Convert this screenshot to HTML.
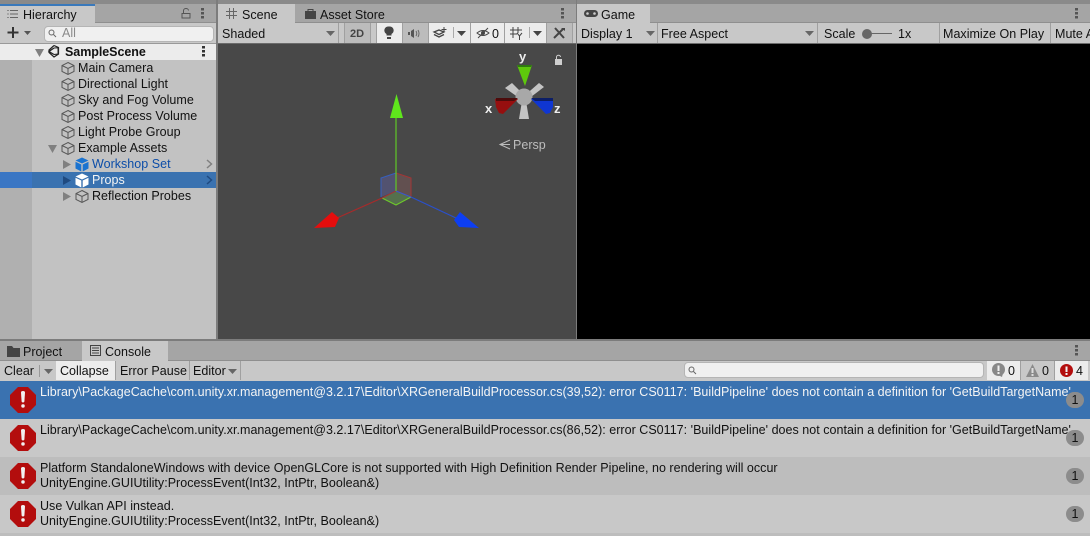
<!DOCTYPE html>
<html><head><meta charset="utf-8">
<style>
html,body{margin:0;padding:0}
body{width:1090px;height:536px;position:relative;overflow:hidden;background:#8a8a8a;font-family:"Liberation Sans",sans-serif;font-size:12.5px;color:#111;letter-spacing:.025px}
.b{position:absolute}
.t{position:absolute;white-space:pre;line-height:16px;height:16px}
svg{position:absolute;overflow:visible}
</style></head><body>
<svg width="0" height="0" style="position:absolute"><defs>
<g id="cube" fill="none" stroke="#555" stroke-width="1"><path d="M7 1.5 L13 4.5 V10.5 L7 13.5 L1 10.5 V4.5 Z M1 4.5 L7 7.5 L13 4.5 M7 7.500 V13.500"/></g>
<g id="err"><path d="M8 0H18L26 8V18L18 26H8L0 18V8Z" fill="#b30d0d"/><path d="M11 5.500Q11 4 13 4T15 5.500L14.400 14.500Q14.200 15.500 13 15.500T11.600 14.500Z" fill="#f2f2f2"/><rect x="11.300" y="17.200" width="3.400" height="3.400" rx="1.400" fill="#f2f2f2"/></g>
</defs></svg>

<!-- HIERARCHY -->
<div class="b" style="left:0;top:4px;width:216px;height:19px;background:#a5a5a5"></div>
<div class="b" style="left:0;top:4px;width:95px;height:19px;background:#c8c8c8"></div>
<div class="b" style="left:0;top:4px;width:95px;height:2px;background:#3a79bb"></div>
<div class="b" style="left:0;top:22px;width:216px;height:1px;background:#8f8f8f"></div>
<div class="b" style="left:0;top:22px;width:95px;height:1px;background:#c8c8c8"></div>
<svg style="left:7px;top:9px" width="12" height="10"><path d="M3 1.500H11M3 5H11M3 8.500H11" stroke="#666" fill="none"/><path d="M0 1.500H2M0 5H2M0 8.500H2" stroke="#888" fill="none"/></svg>
<div class="t" style="left:23px;top:7px">Hierarchy</div>
<svg style="left:181px;top:8px" width="10" height="11"><path d="M2.500 5V2.500A2.500 2 0 0 1 7.500 2.500M1 5.500H9V10H1Z" fill="none" stroke="#555"/></svg>
<svg style="left:201px;top:8px" width="3" height="11"><path d="M0 0h3v2.500H0zM0 4h3v2.500H0zM0 8h3v2.500H0z" fill="#555"/></svg>
<div class="b" style="left:0;top:23px;width:216px;height:21px;background:#c8c8c8"></div>
<div class="b" style="left:0;top:43px;width:216px;height:1px;background:#999"></div>
<svg style="left:7px;top:26px" width="24" height="14"><path d="M6 1V12M0.500 6.500H11.500" stroke="#333" stroke-width="2" fill="none"/><path d="M17 5H24L20.500 9Z" fill="#555"/></svg>
<div class="b" style="left:44px;top:26px;width:168px;height:14px;background:#f0f0f0;border:1px solid #b5b5b5;border-radius:4px"></div>
<svg style="left:48px;top:29px" width="10" height="9"><circle cx="3.500" cy="3.500" r="2.500" fill="none" stroke="#666"/><path d="M5.500 5.500L8 8" stroke="#666"/></svg>
<div class="t" style="left:62px;top:25px;color:#8a8a8a">All</div>

<div class="b" style="left:0;top:44px;width:32px;height:295px;background:#b0b0b0"></div>
<div class="b" style="left:32px;top:44px;width:184px;height:295px;background:#c2c2c2"></div>
<div class="b" style="left:0;top:44px;width:216px;height:16px;background:#ececec"></div>
<div class="b" style="left:0;top:172px;width:216px;height:16px;background:#3a72b0"></div>
<div class="b" style="left:0;top:172px;width:32px;height:16px;background:#3a76c4"></div>
<div class="b" style="left:216px;top:0;width:2px;height:340px;background:#7c7c7c"></div>

<svg style="left:35px;top:49px" width="9" height="8"><path d="M0 0H9L4.500 8Z" fill="#808080"/></svg>
<svg style="left:47px;top:44px" width="14" height="15"><path d="M7 1.500L11.500 3.500V10L7 13 2 8.500 2 6 7 1.500M7 4L2 7.500 7 10.500" fill="none" stroke="#222" stroke-width="1.200"/><path d="M7 4L11 3.800V10L7 10.500" fill="none" stroke="#222"/></svg>
<div class="t" style="left:65px;top:44px;font-weight:bold;letter-spacing:-.05px">SampleScene</div>
<svg style="left:202px;top:46px" width="3" height="11"><path d="M0 0h3v2.500H0zM0 4h3v2.500H0zM0 8h3v2.500H0z" fill="#333"/></svg>

<svg style="left:61px;top:61px" width="14" height="15"><use href="#cube"/></svg><div class="t" style="left:78px;top:60px">Main Camera</div>
<svg style="left:61px;top:77px" width="14" height="15"><use href="#cube"/></svg><div class="t" style="left:78px;top:76px">Directional Light</div>
<svg style="left:61px;top:93px" width="14" height="15"><use href="#cube"/></svg><div class="t" style="left:78px;top:92px">Sky and Fog Volume</div>
<svg style="left:61px;top:109px" width="14" height="15"><use href="#cube"/></svg><div class="t" style="left:78px;top:108px">Post Process Volume</div>
<svg style="left:61px;top:125px" width="14" height="15"><use href="#cube"/></svg><div class="t" style="left:78px;top:124px">Light Probe Group</div>
<svg style="left:48px;top:145px" width="9" height="8"><path d="M0 0H9L4.500 8Z" fill="#808080"/></svg>
<svg style="left:61px;top:141px" width="14" height="15"><use href="#cube"/></svg><div class="t" style="left:78px;top:140px">Example Assets</div>

<svg style="left:63px;top:160px" width="8" height="9"><path d="M0 0V9L8 4.500Z" fill="#808080"/></svg>
<svg style="left:75px;top:157px" width="14" height="15"><path d="M7 .5L13.500 3.500 7 6.500 .5 3.500Z" fill="#1a73d0"/><path d="M.5 4.800L6.300 7.500V14.500L.5 11.500ZM13.500 4.800L7.700 7.500V14.500L13.500 11.500Z" fill="#1a73d0"/></svg>
<div class="t" style="left:92px;top:156px;color:#0c4da8">Workshop Set</div>
<svg style="left:206px;top:159px" width="7" height="10"><path d="M1 1L5.500 5 1 9" fill="none" stroke="#808080" stroke-width="1.500"/></svg>

<svg style="left:63px;top:176px" width="8" height="9"><path d="M0 0V9L8 4.500Z" fill="#1f4a80"/></svg>
<svg style="left:75px;top:173px" width="14" height="15"><path d="M7 .5L13.500 3.500 7 6.500 .5 3.500Z" fill="#fff"/><path d="M.5 4.800L6.300 7.500V14.500L.5 11.500ZM13.500 4.800L7.700 7.500V14.500L13.500 11.500Z" fill="#fff"/></svg>
<div class="t" style="left:92px;top:172px;color:#f4f4f4">Props</div>
<svg style="left:206px;top:175px" width="7" height="10"><path d="M1 1L5.500 5 1 9" fill="none" stroke="#1f4a80" stroke-width="1.500"/></svg>

<svg style="left:63px;top:192px" width="8" height="9"><path d="M0 0V9L8 4.500Z" fill="#808080"/></svg>
<svg style="left:75px;top:189px" width="14" height="15"><use href="#cube"/></svg><div class="t" style="left:92px;top:188px">Reflection Probes</div>

<!-- SCENE -->
<div class="b" style="left:218px;top:4px;width:358px;height:19px;background:#a5a5a5"></div>
<div class="b" style="left:218px;top:4px;width:77px;height:19px;background:#c8c8c8"></div>
<div class="b" style="left:218px;top:22px;width:358px;height:1px;background:#8f8f8f"></div>
<div class="b" style="left:218px;top:22px;width:77px;height:1px;background:#c8c8c8"></div>
<svg style="left:226px;top:8px" width="11" height="11"><path d="M3.500 0V11M7.500 0V11M0 3.500H11M0 7.500H11" stroke="#666" fill="none"/></svg>
<div class="t" style="left:242px;top:7px">Scene</div>
<svg style="left:305px;top:8px" width="11" height="11"><path d="M0 3H11V11H0Z" fill="#444"/><path d="M3 3V1.500H8V3" stroke="#444" fill="none"/></svg>
<div class="t" style="left:320px;top:7px">Asset Store</div>
<svg style="left:561px;top:8px" width="3" height="11"><path d="M0 0h3v2.500H0zM0 4h3v2.500H0zM0 8h3v2.500H0z" fill="#555"/></svg>

<div class="b" style="left:218px;top:23px;width:358px;height:20px;background:#c8c8c8"></div>
<div class="b" style="left:218px;top:43px;width:358px;height:1px;background:#6b6b6b"></div>
<div class="t" style="left:222px;top:26px">Shaded</div>
<svg style="left:326px;top:31px" width="9" height="5"><path d="M0 0H9L4.500 5Z" fill="#666"/></svg>
<div class="b" style="left:338px;top:23px;width:1px;height:20px;background:#a0a0a0"></div>
<div class="b" style="left:344px;top:23px;width:1px;height:20px;background:#a0a0a0"></div>
<div class="b" style="left:345px;top:23px;width:25px;height:20px;background:#bcbcbc"></div>
<div class="t" style="left:350px;top:26px;font-size:11px;letter-spacing:0;color:#444;font-weight:bold">2D</div>
<div class="b" style="left:370px;top:23px;width:1px;height:20px;background:#a0a0a0"></div>
<div class="b" style="left:376px;top:23px;width:1px;height:20px;background:#a0a0a0"></div>
<div class="b" style="left:377px;top:23px;width:25px;height:20px;background:#ececec"></div>
<svg style="left:384px;top:26px" width="10" height="14"><path d="M5 0.500A4 4 0 0 1 7.500 8V9.500H2.500V8A4 4 0 0 1 5 0.500Z" fill="#444"/><path d="M3 11H7V13H3Z" fill="#444"/></svg>
<div class="b" style="left:402px;top:23px;width:1px;height:20px;background:#a0a0a0"></div>
<div class="b" style="left:403px;top:23px;width:25px;height:20px;background:#bcbcbc"></div>
<svg style="left:408px;top:29px" width="13" height="9"><path d="M0 3H2V6H0ZM3 2L6 0V9L3 7Z" fill="#555"/><path d="M8 2Q9.500 4.500 8 7M10 1Q12 4.500 10 8" stroke="#666" fill="none"/></svg>
<div class="b" style="left:428px;top:23px;width:1px;height:20px;background:#a0a0a0"></div>
<div class="b" style="left:429px;top:23px;width:41px;height:20px;background:#ececec"></div>
<svg style="left:433px;top:27px" width="14" height="12"><path d="M1 5L6 3 11 5 6 7.500ZM1 7.500L6 10 11 7.500" stroke="#444" fill="none" stroke-width="1.300"/><path d="M11 0V5M8.500 2.500H13.500" stroke="#444"/></svg>
<div class="b" style="left:453px;top:27px;width:1px;height:11px;background:#aaa"></div>
<svg style="left:457px;top:31px" width="9" height="5"><path d="M0 0H9L4.500 5Z" fill="#444"/></svg>
<div class="b" style="left:470px;top:23px;width:1px;height:20px;background:#a0a0a0"></div>
<div class="b" style="left:471px;top:23px;width:33px;height:20px;background:#ececec"></div>
<svg style="left:476px;top:28px" width="14" height="10"><path d="M1 5Q7 0 13 5Q7 10 1 5Z" fill="none" stroke="#444"/><path d="M2 10L12 0" stroke="#444"/><circle cx="7" cy="5" r="2" fill="#444"/></svg>
<div class="t" style="left:492px;top:26px;letter-spacing:0">0</div>
<div class="b" style="left:504px;top:23px;width:1px;height:20px;background:#a0a0a0"></div>
<div class="b" style="left:505px;top:23px;width:41px;height:20px;background:#ececec"></div>
<svg style="left:510px;top:27px" width="14" height="13"><path d="M3 0V11M8 0V6M0 3H12M0 7H7" stroke="#444" fill="none"/><path d="M7 6L9.500 9 12 6M9.500 9V13" stroke="#444" fill="none"/></svg>
<div class="b" style="left:529px;top:27px;width:1px;height:11px;background:#aaa"></div>
<svg style="left:533px;top:31px" width="9" height="5"><path d="M0 0H9L4.500 5Z" fill="#444"/></svg>
<div class="b" style="left:546px;top:23px;width:1px;height:20px;background:#a0a0a0"></div>
<div class="b" style="left:547px;top:23px;width:25px;height:20px;background:#bcbcbc"></div>
<svg style="left:553px;top:27px" width="13" height="13"><path d="M1 11L10 2M2 1L11 11" stroke="#444" stroke-width="2"/><path d="M8 1L12 1 12 4Z" fill="#444"/></svg>
<div class="b" style="left:572px;top:23px;width:1px;height:20px;background:#a0a0a0"></div>

<div class="b" style="left:218px;top:44px;width:358px;height:295px;background:#484848"></div>
<div class="b" style="left:576px;top:0;width:1px;height:340px;background:#7c7c7c"></div>

<svg style="left:218px;top:44px" width="358" height="295">
 <g transform="translate(-218,-44)">
 <path d="M381 178L396 173 396 191 381 197Z" fill="#525270"/>
 <path d="M396 173L411 178 411 197 396 191Z" fill="#625050"/>
 <path d="M396 191L411 197 396 205 382 198Z" fill="#55704d"/>
 <path d="M381 197V178L396 173" stroke="#3560c0" fill="none"/>
 <path d="M396 173L411 178V197" stroke="#a33535" fill="none"/>
 <path d="M382 198L396 205 411 197" stroke="#6ecb2a" fill="none"/>
 <path d="M396 191L382 198" stroke="#a33535" fill="none"/>
 <path d="M396 191L411 197" stroke="#3a55d0" fill="none"/>
 <path d="M396 118V191" stroke="#60c827" stroke-width="1.200"/>
 <path d="M396.500 94L403 118H390Z" fill="#5fe61c"/>
 <path d="M382 198L337 218" stroke="#a82a2a" stroke-width="1.200"/>
 <path d="M314 228L332 212 339 218 335 227Z" fill="#e50d0d"/>
 <path d="M411 197L456 218" stroke="#2a50cc" stroke-width="1.200"/>
 <path d="M479 228L460 212 454 220 459 227Z" fill="#0d3ef2"/>

 <!-- orientation gizmo -->
 <path d="M505 88L512 83 526 97 522 100Z" fill="#c4c4c4"/>
 <path d="M544 87L539 83 523 97 527 100Z" fill="#c4c4c4"/>
 <path d="M519 119H529L525.500 98H522.500Z" fill="#c4c4c4"/>
 <circle cx="524" cy="97" r="8.500" fill="#a8a8a8"/>
 <path d="M517 65H532L525 86Z" fill="#5ec80c"/>
 <path d="M517 65H532L531 67H518Z" fill="#2f7a10"/>
 <path d="M495 99H518L503 114 499 113 496 107Z" fill="#960f0f"/>
 <path d="M496 98H518L514 101 496 101Z" fill="#4c0c0c"/>
 <path d="M553 99H531L546 114 550 113 553 107Z" fill="#0f36d2"/>
 <path d="M553 98H531L535 101 553 101Z" fill="#0c1e66"/>
 <path d="M555 59H562V65H555Z" fill="#cfcfcf"/>
 <path d="M556.500 59V57A2 1.800 0 0 1 560.500 57" stroke="#cfcfcf" fill="none"/>
 <path d="M510 140L500 144.500 510 149M500 144.500H510" stroke="#bdbdbd" fill="none"/>
 </g>
</svg>
<div class="t" style="left:519px;top:49px;color:#eee;font-weight:bold;letter-spacing:0;font-size:13px">y</div>
<div class="t" style="left:485px;top:101px;color:#eee;font-weight:bold;letter-spacing:0;font-size:13px">x</div>
<div class="t" style="left:554px;top:101px;color:#eee;font-weight:bold;letter-spacing:0;font-size:13px">z</div>
<div class="t" style="left:513px;top:137px;color:#bdbdbd">Persp</div>

<!-- GAME -->
<div class="b" style="left:577px;top:4px;width:513px;height:19px;background:#a5a5a5"></div>
<div class="b" style="left:577px;top:4px;width:73px;height:19px;background:#c8c8c8"></div>
<div class="b" style="left:577px;top:22px;width:513px;height:1px;background:#8f8f8f"></div>
<div class="b" style="left:577px;top:22px;width:73px;height:1px;background:#c8c8c8"></div>
<svg style="left:584px;top:10px" width="14" height="8"><rect x="0" y="0" width="14" height="7" rx="3.500" fill="#444"/><circle cx="3.500" cy="3.500" r="1.300" fill="#ccc"/><circle cx="10.500" cy="3.500" r="1.300" fill="#ccc"/></svg>
<div class="t" style="left:601px;top:7px">Game</div>
<svg style="left:1075px;top:8px" width="3" height="11"><path d="M0 0h3v2.500H0zM0 4h3v2.500H0zM0 8h3v2.500H0z" fill="#555"/></svg>
<div class="b" style="left:577px;top:23px;width:513px;height:20px;background:#c8c8c8"></div>
<div class="b" style="left:577px;top:43px;width:513px;height:1px;background:#6b6b6b"></div>
<div class="t" style="left:581px;top:26px">Display 1</div>
<svg style="left:646px;top:31px" width="9" height="5"><path d="M0 0H9L4.500 5Z" fill="#666"/></svg>
<div class="b" style="left:657px;top:23px;width:1px;height:20px;background:#a0a0a0"></div>
<div class="t" style="left:661px;top:26px">Free Aspect</div>
<svg style="left:805px;top:31px" width="9" height="5"><path d="M0 0H9L4.500 5Z" fill="#666"/></svg>
<div class="b" style="left:817px;top:23px;width:1px;height:20px;background:#a0a0a0"></div>
<div class="t" style="left:824px;top:26px">Scale</div>
<div class="b" style="left:868px;top:33px;width:24px;height:1px;background:#666"></div>
<div class="b" style="left:862px;top:29px;width:10px;height:10px;border-radius:50%;background:#666"></div>
<div class="t" style="left:898px;top:26px">1x</div>
<div class="b" style="left:939px;top:23px;width:1px;height:20px;background:#a0a0a0"></div>
<div class="t" style="left:943px;top:26px">Maximize On Play</div>
<div class="b" style="left:1050px;top:23px;width:1px;height:20px;background:#a0a0a0"></div>
<div class="t" style="left:1055px;top:26px">Mute Audio</div>
<div class="b" style="left:577px;top:44px;width:513px;height:295px;background:#000"></div>

<!-- CONSOLE -->
<div class="b" style="left:0;top:339px;width:1090px;height:2px;background:#7c7c7c"></div>
<div class="b" style="left:0;top:341px;width:1090px;height:19px;background:#a5a5a5"></div>
<div class="b" style="left:82px;top:341px;width:86px;height:19px;background:#c8c8c8"></div>
<svg style="left:7px;top:346px" width="13" height="11"><path d="M0 0H5L6.500 2H13V11H0Z" fill="#444"/></svg>
<div class="t" style="left:23px;top:344px">Project</div>
<svg style="left:90px;top:345px" width="11" height="11"><path d="M.5 .5H10.500V10.500H.5Z" fill="none" stroke="#444"/><path d="M2 3H9M2 5.500H9M2 8H9" stroke="#444"/></svg>
<div class="t" style="left:105px;top:344px">Console</div>
<svg style="left:1075px;top:345px" width="3" height="11"><path d="M0 0h3v2.500H0zM0 4h3v2.500H0zM0 8h3v2.500H0z" fill="#555"/></svg>
<div class="b" style="left:0;top:360px;width:1090px;height:21px;background:#c8c8c8"></div>
<div class="b" style="left:0;top:360px;width:82px;height:1px;background:#8f8f8f"></div>
<div class="b" style="left:168px;top:360px;width:922px;height:1px;background:#8f8f8f"></div>
<div class="t" style="left:4px;top:363px">Clear</div>
<div class="b" style="left:39px;top:365px;width:1px;height:12px;background:#999"></div>
<svg style="left:44px;top:369px" width="9" height="5"><path d="M0 0H9L4.500 5Z" fill="#666"/></svg>
<div class="b" style="left:56px;top:361px;width:59px;height:19px;background:#ececec"></div>
<div class="t" style="left:60px;top:363px">Collapse</div>
<div class="b" style="left:115px;top:361px;width:1px;height:19px;background:#a0a0a0"></div>
<div class="t" style="left:120px;top:363px">Error Pause</div>
<div class="b" style="left:189px;top:361px;width:1px;height:19px;background:#a0a0a0"></div>
<div class="t" style="left:193px;top:363px">Editor</div>
<svg style="left:228px;top:369px" width="9" height="5"><path d="M0 0H9L4.500 5Z" fill="#666"/></svg>
<div class="b" style="left:240px;top:361px;width:1px;height:19px;background:#a0a0a0"></div>
<div class="b" style="left:684px;top:362px;width:298px;height:14px;background:#f0f0f0;border:1px solid #b5b5b5;border-radius:4px"></div>
<svg style="left:688px;top:366px" width="10" height="9"><circle cx="3.500" cy="3.500" r="2.500" fill="none" stroke="#666"/><path d="M5.500 5.500L8 8" stroke="#666"/></svg>
<div class="b" style="left:987px;top:361px;width:33px;height:19px;background:#ececec"></div>
<svg style="left:992px;top:363px" width="13" height="14"><circle cx="6.500" cy="6.500" r="6.500" fill="#888"/><path d="M6 12L11 10 10 14Z" fill="#888"/><rect x="5.500" y="2.500" width="2" height="5.500" fill="#f0f0f0"/><rect x="5.500" y="9" width="2" height="2" fill="#f0f0f0"/></svg>
<div class="t" style="left:1008px;top:363px;letter-spacing:0">0</div>
<div class="b" style="left:1020px;top:361px;width:1px;height:19px;background:#a0a0a0"></div>
<svg style="left:1026px;top:364px" width="13" height="13"><path d="M6.500 0L13 13H0Z" fill="#8a8a8a"/><rect x="5.500" y="4" width="2" height="5" fill="#ddd"/><rect x="5.500" y="10" width="2" height="2" fill="#ddd"/></svg>
<div class="t" style="left:1042px;top:363px;letter-spacing:0">0</div>
<div class="b" style="left:1054px;top:361px;width:1px;height:19px;background:#a0a0a0"></div>
<div class="b" style="left:1055px;top:361px;width:33px;height:19px;background:#ececec"></div>
<svg style="left:1060px;top:364px" width="13" height="13"><circle cx="6.500" cy="6.500" r="6.500" fill="#b30d0d"/><rect x="5.500" y="2.500" width="2" height="5.500" fill="#f2f2f2"/><rect x="5.500" y="9" width="2" height="2" fill="#f2f2f2"/></svg>
<div class="t" style="left:1076px;top:363px;letter-spacing:0">4</div>

<div class="b" style="left:0;top:381px;width:1090px;height:38px;background:#3a72b0"></div>
<div class="b" style="left:0;top:419px;width:1090px;height:38px;background:#c8c8c8"></div>
<div class="b" style="left:0;top:457px;width:1090px;height:38px;background:#bdbdbd"></div>
<div class="b" style="left:0;top:495px;width:1090px;height:38px;background:#c8c8c8"></div>
<div class="b" style="left:0;top:533px;width:1090px;height:3px;background:#bdbdbd"></div>

<svg style="left:10px;top:387px" width="26" height="26"><use href="#err"/></svg>
<svg style="left:10px;top:425px" width="26" height="26"><use href="#err"/></svg>
<svg style="left:10px;top:463px" width="26" height="26"><use href="#err"/></svg>
<svg style="left:10px;top:501px" width="26" height="26"><use href="#err"/></svg>

<div class="t" style="left:40px;top:384px;color:#f4f4f4">Library\PackageCache\com.unity.xr.management@3.2.17\Editor\XRGeneralBuildProcessor.cs(39,52): error CS0117: 'BuildPipeline' does not contain a definition for 'GetBuildTargetName'</div>
<div class="t" style="left:40px;top:422px">Library\PackageCache\com.unity.xr.management@3.2.17\Editor\XRGeneralBuildProcessor.cs(86,52): error CS0117: 'BuildPipeline' does not contain a definition for 'GetBuildTargetName'</div>
<div class="t" style="left:40px;top:460px">Platform StandaloneWindows with device OpenGLCore is not supported with High Definition Render Pipeline, no rendering will occur</div>
<div class="t" style="left:40px;top:475px">UnityEngine.GUIUtility:ProcessEvent(Int32, IntPtr, Boolean&amp;)</div>
<div class="t" style="left:40px;top:498px">Use Vulkan API instead.</div>
<div class="t" style="left:40px;top:513px">UnityEngine.GUIUtility:ProcessEvent(Int32, IntPtr, Boolean&amp;)</div>

<div class="b" style="left:1066px;top:392px;width:18px;height:16px;border-radius:8px;background:#8c8c8c;text-align:center;line-height:16px;letter-spacing:0">1</div>
<div class="b" style="left:1066px;top:430px;width:18px;height:16px;border-radius:8px;background:#8c8c8c;text-align:center;line-height:16px;letter-spacing:0">1</div>
<div class="b" style="left:1066px;top:468px;width:18px;height:16px;border-radius:8px;background:#8c8c8c;text-align:center;line-height:16px;letter-spacing:0">1</div>
<div class="b" style="left:1066px;top:506px;width:18px;height:16px;border-radius:8px;background:#8c8c8c;text-align:center;line-height:16px;letter-spacing:0">1</div>
</body></html>
